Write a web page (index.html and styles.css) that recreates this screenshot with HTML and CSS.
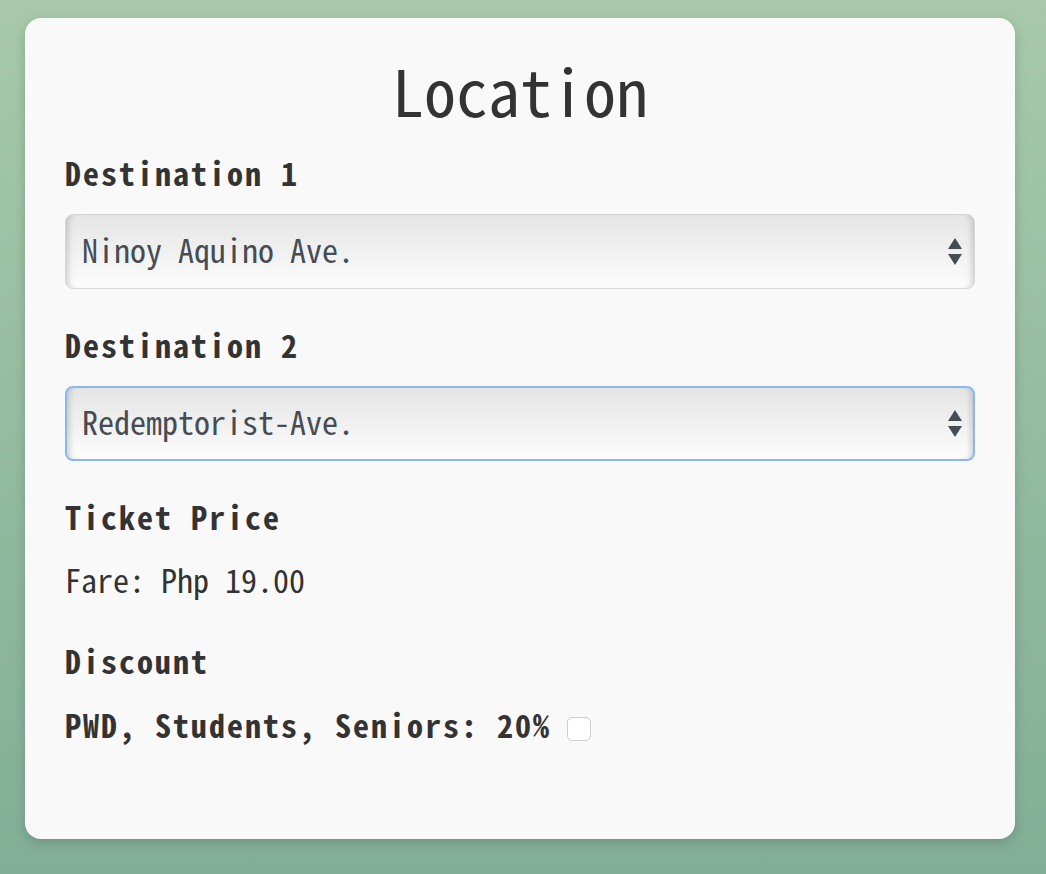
FILE: index.html
```html
<!DOCTYPE html>
<html lang="en">
<head>
    <meta charset="UTF-8">
    <meta name="viewport" content="width=device-width, initial-scale=1.0">
    <title>Location</title>
    <link rel="stylesheet" href="styles.css">
</head>
<body>

    <div class="card">
        <h1>Location</h1>

        <!-- Origem -->
        <label class="field-label" for="dest1">Destination 1</label>
        <div class="select-wrap">
            <select id="dest1">
                <option>Ninoy Aquino Ave.</option>
                <option>Redemptorist-Ave.</option>
            </select>
            <svg class="arrows" width="16" height="30" viewBox="0 0 16 30">
                <path d="M8 1 L15 12 L1 12 Z" fill="#464c54"/>
                <path d="M1 17 L15 17 L8 28 Z" fill="#464c54"/>
            </svg>
        </div>

        <!-- Destino -->
        <label class="field-label" for="dest2">Destination 2</label>
        <div class="select-wrap">
            <select id="dest2" class="active">
                <option>Redemptorist-Ave.</option>
                <option>Ninoy Aquino Ave.</option>
            </select>
            <svg class="arrows" width="16" height="30" viewBox="0 0 16 30">
                <path d="M8 1 L15 12 L1 12 Z" fill="#464c54"/>
                <path d="M1 17 L15 17 L8 28 Z" fill="#464c54"/>
            </svg>
        </div>

        <h2 class="section-title">Ticket Price</h2>
        <p class="fare">Fare: Php 19.00</p>

        <h2 class="section-title">Discount</h2>
        <label class="discount">PWD, Students, Seniors: 20% <input type="checkbox"></label>
    </div>

</body>
</html>
```

FILE: styles.css
```css
html {
    height: 100%;
}
body {
    margin: 0;
    min-height: 100%;
    background: linear-gradient(#a7c9a9, #82ae97);
    font-family: "Noto Sans CJK JP", "DejaVu Sans Mono", monospace;
    font-feature-settings: "hwid";
    color: #333;
    padding: 18px 31px 30px 25px;
    box-sizing: border-box;
}
.card {
    background-color: #f9f9f9;
    border-radius: 16px;
    box-shadow: 0px 4px 12px rgba(0, 0, 0, 0.16);
    padding: 31px 40px 95px 40px;
    display: flex;
    flex-direction: column;
    align-items: flex-start;
}
h1 {
    align-self: stretch;
    text-align: center;
    font-size: 64px;
    font-weight: normal;
    line-height: 80px;
    margin: 0 0 23px 0;
}
.field-label, .section-title {
    display: block;
    font-size: 32px;
    line-height: 40px;
    font-weight: bold;
    letter-spacing: 2px;
    margin: 0 0 22px 0;
}
.section-title {
    margin-bottom: 23px;
}
.select-wrap {
    position: relative;
    align-self: stretch;
    margin-bottom: 35px;
}
select {
    appearance: none;
    -webkit-appearance: none;
    width: 100%;
    height: 75px;
    font-family: inherit;
    font-feature-settings: "hwid";
    font-size: 32px;
    color: #464c54;
    padding: 0 60px 6px 16px;
    border: 1px solid #d6d6d6;
    border-radius: 8px;
    background: linear-gradient(#e5e5e5, #fcfcfc);
    box-shadow: inset 7px 0 6px -5px rgba(0, 0, 0, 0.18), inset -7px 0 6px -5px rgba(0, 0, 0, 0.18);
    outline: none;
}
select.active {
    border: 2px solid #8ab6f2;
    padding-left: 15px;
}
.arrows {
    position: absolute;
    right: 12px;
    top: 23px;
    pointer-events: none;
}
.fare {
    font-size: 32px;
    line-height: 40px;
    margin: 0 0 41px 0;
}
.discount {
    display: flex;
    align-items: center;
    gap: 16px;
    margin-top: 1px;
    font-size: 32px;
    line-height: 40px;
    font-weight: bold;
    letter-spacing: 2px;
}
.discount input {
    appearance: none;
    -webkit-appearance: none;
    width: 24px;
    height: 24px;
    margin: 10px 0 0 0;
    border: 1px solid #cfcfcf;
    border-radius: 5px;
    background: #fff;
}
```
